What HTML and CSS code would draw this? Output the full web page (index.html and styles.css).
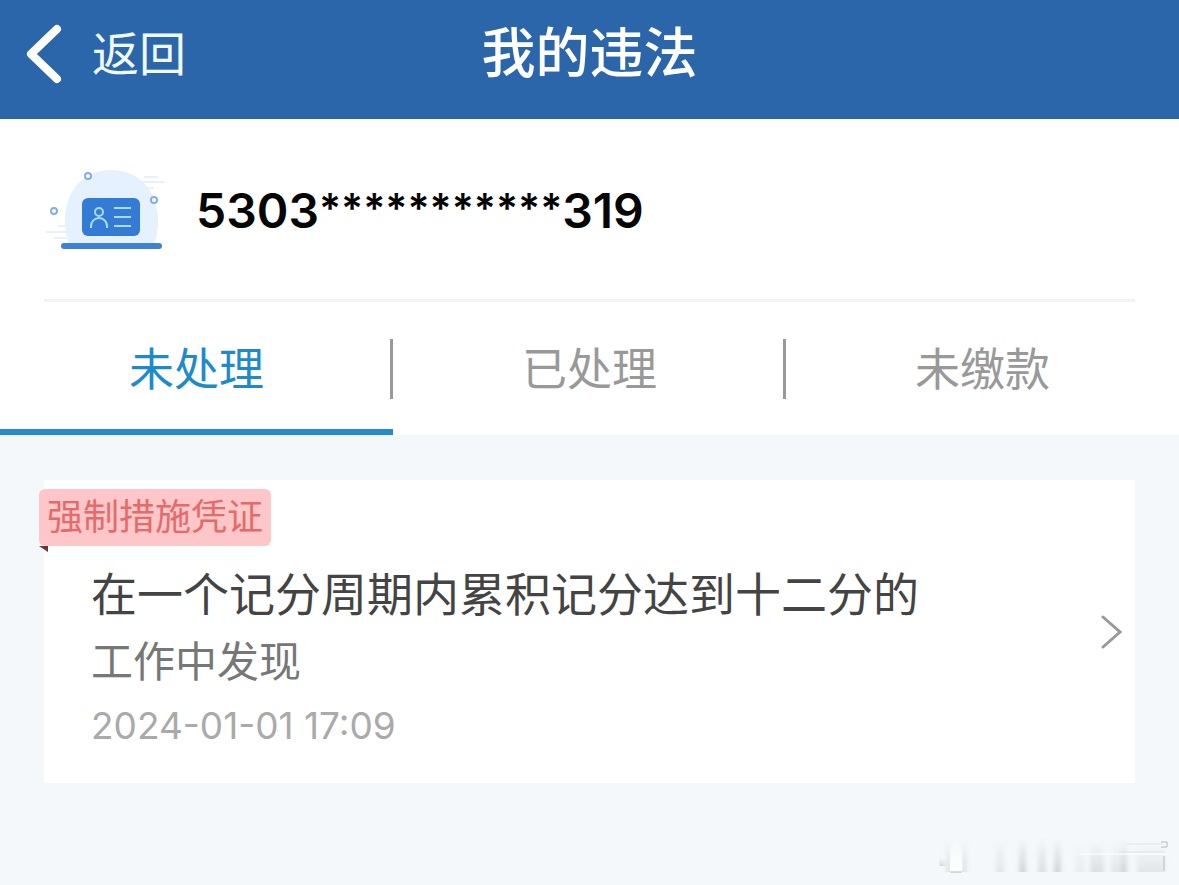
FILE: index.html
```
<!DOCTYPE html>
<html lang="zh-CN">
  <head>
    <meta charset="UTF-8" />
    <meta name="viewport" content="width=device-width, initial-scale=1.0" />
    <title>我的违法</title>
    <link rel="stylesheet" href="styles.css">
  </head>
  <body>
    <header class="navbar">
      <button type="button" class="back">
        <svg class="back-icon" viewBox="0 0 36 60" aria-hidden="true">
          <path d="M31 5 L5 30 L31 55" />
        </svg>
        <span>返回</span>
      </button>
      <h1>我的违法</h1>
    </header>

    <section class="panel">
      <div class="license">
        <svg class="license-icon" viewBox="0 0 120 84" aria-hidden="true">
          <path class="halo" d="M25 75 Q21 66 21 52 C21 20 41 1 67 1 C95 1 114 22 114 52 Q114 66 110 75 Z" />
          <g class="wind">
            <path d="M100 8h14M92 13h28M100 19h10M14 57h8M2 63h22M10 69h12" />
          </g>
          <g class="dots">
            <circle cx="44" cy="7" r="3" />
            <circle cx="110" cy="31" r="3" />
            <circle cx="10" cy="42" r="3" />
          </g>
          <rect class="card-shape" x="38" y="29" width="58" height="38" rx="6" />
          <path class="base" d="M20 77h95" />
          <g class="card-lines">
            <circle cx="55" cy="43" r="4" />
            <path d="M47 59v-2a8 8 0 0 1 16 0v2M70 39h17M70 48h17M70 57h17" />
          </g>
        </svg>
        <span class="license-no">5303<span class="mask">***********</span>319</span>
      </div>

      <nav class="tabs">
        <a href="#todo" class="tab active">未处理</a>
        <a href="#done" class="tab">已处理</a>
        <a href="#unpaid" class="tab">未缴款</a>
      </nav>
    </section>

    <main class="list">
      <a href="#detail" class="record">
        <div class="record-main">
          <span class="tag">强制措施凭证</span>
          <div class="record-text">
            <h2>在一个记分周期内累积记分达到十二分的</h2>
            <p class="source">工作中发现</p>
            <p class="time">2024-01-01 17:09</p>
          </div>
        </div>
        <svg class="arrow" viewBox="0 0 22 34" aria-hidden="true">
          <path d="M2 2 L19 17 L2 32" />
        </svg>
      </a>
    </main>

    <svg class="watermark" viewBox="0 0 240 50" aria-hidden="true">
      <defs>
        <linearGradient id="fade" x1="0" y1="0" x2="0" y2="1">
          <stop offset="0" stop-color="#8c9294" stop-opacity="0" />
          <stop offset="1" stop-color="#8c9294" stop-opacity="0.35" />
        </linearGradient>
        <linearGradient id="glow" x1="0" y1="0" x2="0" y2="1">
          <stop offset="0" stop-color="#fff" stop-opacity="0" />
          <stop offset="1" stop-color="#fff" />
        </linearGradient>
        <filter id="soft" x="-10%" y="-10%" width="120%" height="120%">
          <feGaussianBlur stdDeviation="2 0" />
        </filter>
      </defs>
      <g fill="url(#fade)" filter="url(#soft)">
        <rect x="8" y="8" width="3" height="34" />
        <rect x="24" y="8" width="3" height="34" />
        <rect x="0" y="28" width="5" height="8" />
        <rect x="57" y="8" width="8" height="34" opacity="0.5" />
        <rect x="80" y="8" width="7" height="34" />
        <rect x="99" y="8" width="8" height="34" opacity="0.7" />
        <rect x="115" y="8" width="7" height="34" />
        <rect x="136" y="12" width="10" height="30" opacity="0.3" />
        <rect x="151" y="12" width="14" height="30" opacity="0.7" />
        <rect x="172" y="12" width="10" height="30" opacity="0.5" />
        <rect x="182" y="8" width="6" height="34" />
        <rect x="198" y="14" width="28" height="28" opacity="0.5" />
      </g>
      <rect x="11" y="8" width="12" height="34" fill="url(#glow)" />
      <path class="wm-line" d="M11 42h12" />
      <path class="wm-line faint" d="M188 14h36M180 22h46" />
      <path class="wm-line" d="M222 12h6v5h-6M225 26v15" />
      <path class="wm-light" d="M140 24h88" />
    </svg>
  </body>
</html>
```

FILE: styles.css
```
* {
  box-sizing: border-box;
}
body {
  position: relative;
  margin: 0;
  min-height: 100vh;
  display: flex;
  flex-direction: column;
  background-color: #f4f8fa;
  color: #444;
  font-family: Inter, "Noto Sans CJK SC", sans-serif;
}
h1,
h2,
p {
  margin: 0;
  font-weight: 400;
}
a {
  color: inherit;
  text-decoration: none;
}

.navbar {
  display: grid;
  grid-template-columns: 1fr auto 1fr;
  align-items: center;
  height: 119px;
  padding: 0 26px 11px;
  background-color: #2b65aa;
  color: #fff;
}
.navbar h1 {
  font-size: 54px;
  line-height: 80px;
  font-weight: 500;
}
.back {
  display: flex;
  align-items: center;
  justify-self: start;
  gap: 30px;
  padding: 0;
  border: none;
  background: none;
  color: #effaff;
  font-family: inherit;
  font-size: 47px;
  line-height: 72px;
  cursor: pointer;
}
.back-icon {
  width: 36px;
  height: 60px;
  fill: none;
  stroke: #fff;
  stroke-width: 8;
  stroke-linecap: round;
  stroke-linejoin: round;
}

.panel {
  background-color: #fff;
}
.license {
  display: flex;
  align-items: center;
  gap: 32px;
  height: 183px;
  margin: 0 44px;
  padding-top: 3px;
  border-bottom: 3px solid #f3f3f3;
}
.license-icon {
  width: 120px;
  height: 84px;
}
.halo {
  fill: #e5f1fe;
}
.wind {
  fill: none;
  stroke: #e9f0fa;
  stroke-width: 2;
}
.dots {
  fill: #fff;
  stroke: #82aee0;
  stroke-width: 2;
}
.card-shape {
  fill: #347bd5;
}
.base {
  stroke: #3d82d4;
  stroke-width: 6;
  stroke-linecap: round;
}
.card-lines {
  fill: none;
  stroke: #a9dcfb;
  stroke-width: 2;
}
.license-no {
  color: #050505;
  font-size: 48px;
  line-height: 60px;
  font-weight: 600;
}
.mask {
  font-size: 41px;
  line-height: 1;
  vertical-align: 5px;
}

.tabs {
  display: flex;
}
.tab {
  position: relative;
  flex: 1;
  height: 133px;
  border-bottom: 6px solid transparent;
  color: #999;
  font-size: 45px;
  line-height: 136px;
  text-align: center;
}
.tab.active {
  color: #208ac9;
  border-color: #258bcb;
}
.tab + .tab::before {
  content: "";
  position: absolute;
  left: -3px;
  top: 37px;
  width: 3px;
  height: 60px;
  background-color: #999;
}

.list {
  flex: 1;
  padding: 45px 44px;
}
.record {
  display: flex;
  align-items: center;
  justify-content: space-between;
  padding-right: 12px;
  background-color: #fff;
}
.record-main {
  padding: 9px 0 25px;
}
.tag {
  position: relative;
  display: inline-block;
  margin-left: -5px;
  padding: 0 8px;
  border-radius: 6px;
  background-color: #fdc6c8;
  color: #e36b6b;
  font-size: 36px;
  line-height: 57px;
}
/* folded corner under the ribbon */
.tag::after {
  content: "";
  position: absolute;
  left: 0;
  top: 100%;
  border-top: 6px solid #6b3538;
  border-left: 9px solid transparent;
}
.record-text {
  padding-left: 47px;
}
.record h2 {
  margin-top: 12px;
  color: #444;
  font-size: 46px;
  line-height: 72px;
}
.source {
  color: #777;
  font-size: 42px;
  line-height: 64px;
}
.time {
  color: #aaa;
  font-size: 37px;
  line-height: 64px;
}
.arrow {
  flex: none;
  width: 22px;
  height: 34px;
  fill: none;
  stroke: #999;
  stroke-width: 3;
  stroke-linecap: round;
}

.watermark {
  position: absolute;
  right: 0;
  bottom: 5px;
  width: 240px;
  height: 50px;
}
.wm-line {
  fill: none;
  stroke: #b4b8b9;
}
.wm-line.faint {
  stroke: #dfe3e4;
}
.wm-light {
  stroke: #fff;
}
```
